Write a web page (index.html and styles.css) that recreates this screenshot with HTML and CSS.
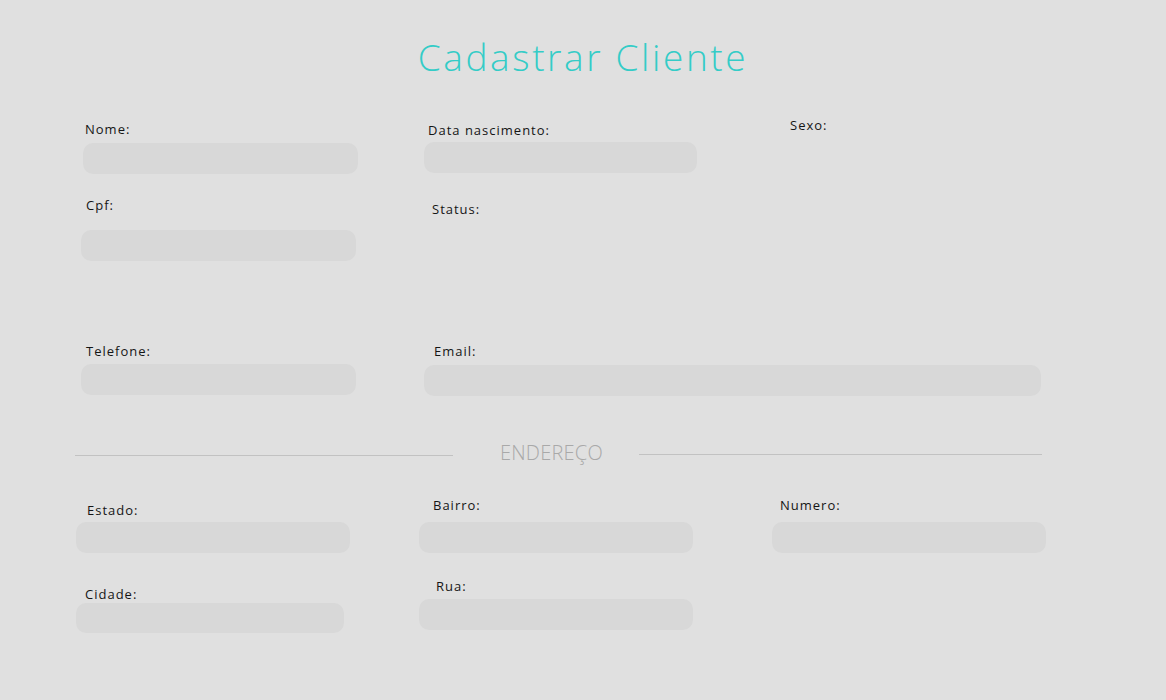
FILE: index.html
```html
<!DOCTYPE html>
<html lang="pt-BR">
<head>
<meta charset="utf-8">
<title>Cadastrar Cliente</title>
<link rel="stylesheet" href="styles.css">
</head>
<body>
<main class="form">
  <h1 class="title">Cadastrar Cliente</h1>

  <div class="row row-1">
    <div class="field f-nome"><label class="lbl">Nome:</label><div class="inp"></div></div>
    <div class="field f-data"><label class="lbl">Data nascimento:</label><div class="inp"></div></div>
    <div class="field f-sexo"><label class="lbl">Sexo:</label></div>
  </div>

  <div class="row row-2">
    <div class="field f-cpf"><label class="lbl">Cpf:</label><div class="inp"></div></div>
    <div class="field f-status"><label class="lbl">Status:</label></div>
  </div>

  <div class="row row-3">
    <div class="field f-tel"><label class="lbl">Telefone:</label><div class="inp"></div></div>
    <div class="field f-email"><label class="lbl">Email:</label><div class="inp"></div></div>
  </div>

  <div class="divider">
    <span class="line line-left"></span>
    <span class="divider-text">ENDEREÇO</span>
    <span class="line line-right"></span>
  </div>

  <div class="row row-4">
    <div class="field f-estado"><label class="lbl">Estado:</label><div class="inp"></div></div>
    <div class="field f-bairro"><label class="lbl">Bairro:</label><div class="inp"></div></div>
    <div class="field f-numero"><label class="lbl">Numero:</label><div class="inp"></div></div>
  </div>

  <div class="row row-5">
    <div class="field f-cidade"><label class="lbl">Cidade:</label><div class="inp"></div></div>
    <div class="field f-rua"><label class="lbl">Rua:</label><div class="inp"></div></div>
  </div>
</main>
</body>
</html>
```
FILE: styles.css
```css
html, body {
  margin: 0;
  padding: 0;
  background: #e0e0e0;
  height: 100%;
}

body {
  font-family: "Open Sans", "Noto Sans", sans-serif;
  color: #111;
}

.form {
  width: 1166px;
  height: 700px;
  box-sizing: border-box;
  padding: 0 0 0 76px;
  overflow: hidden;
}

.title {
  margin: 0;
  padding-top: 34px;
  width: 1014px;
  text-align: center;
  font-weight: 300;
  font-size: 37px;
  line-height: 46px;
  letter-spacing: 2.6px;
  color: #34ccc7;
}

.row {
  display: grid;
  grid-template-columns: 343px 353px 274px;
  align-items: start;
}

.row-1 { margin-top: 35px; }
.row-2 { margin-top: 21px; }
.row-3 { margin-top: 80px; }
.row-4 { margin-top: 0; }
.row-5 { margin-top: 23px; }

.field {
  display: flex;
  flex-direction: column;
  align-items: flex-start;
}

.lbl {
  display: block;
  padding-top: 1px;
  font-size: 13px;
  line-height: 18px;
  letter-spacing: 1px;
  color: #151515;
}

.inp {
  height: 31px;
  border-radius: 10px;
  background: #d8d8d8;
}

/* row 1 */
.f-nome { margin-top: 4px; }
.f-nome .lbl { margin-left: 9px; }
.f-nome .inp { margin-top: 5px; margin-left: 7px; width: 275px; }

.f-data { margin-top: 5px; }
.f-data .lbl { margin-left: 9px; }
.f-data .inp { margin-top: 3px; margin-left: 5px; width: 273px; }

.f-sexo .lbl { margin-left: 18px; }

/* row 2 */
.f-cpf .lbl { margin-left: 10px; }
.f-cpf .inp { margin-top: 16px; margin-left: 5px; width: 275px; }

.f-status { margin-top: 4px; }
.f-status .lbl { margin-left: 13px; }

/* row 3 */
.f-tel .lbl { margin-left: 10px; }
.f-tel .inp { margin-top: 4px; margin-left: 5px; width: 275px; }

.f-email { grid-column: 2 / span 2; }
.f-email .lbl { margin-left: 15px; }
.f-email .inp { margin-top: 5px; margin-left: 5px; width: 617px; }

/* divider */
.divider {
  display: flex;
  align-items: center;
  height: 20px;
  margin-top: 48px;
  margin-bottom: 31px;
}

.line {
  display: block;
  height: 1px;
  background: #c2c2c2;
}

.line-left {
  width: 378px;
  margin-left: -1px;
  margin-top: 2px;
}

.line-right {
  width: 403px;
  margin-left: 36px;
}

.divider-text {
  margin-left: 47px;
  font-size: 20px;
  font-weight: 300;
  letter-spacing: 0.2px;
  color: #a9a9a9;
  line-height: 20px;
  margin-top: -2px;
}

/* row 4 */
.f-estado { margin-top: 5px; }
.f-estado .lbl { margin-left: 11px; }
.f-estado .inp { margin-top: 3px; width: 274px; }

.f-bairro .lbl { margin-left: 14px; }
.f-bairro .inp { margin-top: 8px; width: 274px; }

.f-numero .lbl { margin-left: 8px; }
.f-numero .inp { margin-top: 8px; width: 274px; }

/* row 5 */
.f-cidade { margin-top: 8px; }
.f-cidade .lbl { margin-left: 9px; }
.f-cidade .inp { margin-top: 0; width: 268px; height: 30px; }

.f-rua .lbl { margin-left: 17px; }
.f-rua .inp { margin-top: 4px; width: 274px; }
```
